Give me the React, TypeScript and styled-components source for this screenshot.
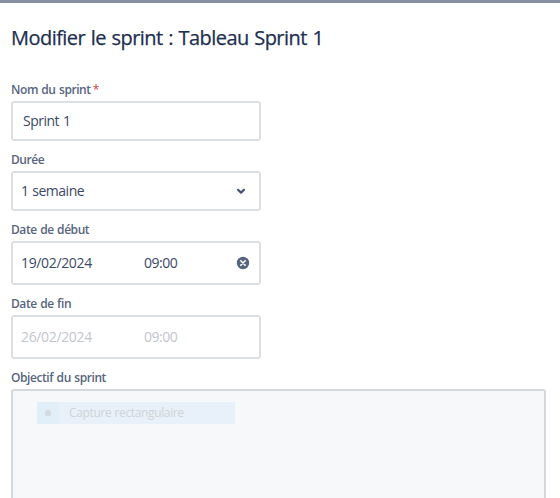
import React from 'react';
import styled, { createGlobalStyle } from 'styled-components';

const GlobalStyle = createGlobalStyle`
  * { box-sizing: border-box; }
  html, body { margin: 0; background: #fff; overflow: hidden; }
  body { font-family: "Open Sans", "Noto Sans", sans-serif; color: #253858; }
`;

const Dialog = styled.main`
  height: 498px;
  overflow: hidden;
  border-top: 3px solid #8590a2;
  padding: 21px 14px 0 11px;
`;

const Title = styled.h1`
  margin: 0 0 30px;
  font-size: 20px;
  line-height: 28px;
  font-weight: 400;
  letter-spacing: -0.54px;
  word-spacing: 0.9px;
  -webkit-text-stroke: 0.25px currentColor;
  white-space: nowrap;
  color: #1d2f50;
`;

const Field = styled.div`
  margin-bottom: 11px;
`;

const Label = styled.label`
  display: block;
  height: 16px;
  margin-bottom: 3px;
  font-size: 12px;
  line-height: 16px;
  font-weight: 600;
  letter-spacing: -0.42px;
  word-spacing: 0.7px;
  color: #58657e;
`;

const Required = styled.span`
  margin-left: 2px;
  color: #d0443e;
  font-size: 12px;
  font-weight: 400;
`;

const Control = styled.div<{ $height?: number; $indent?: number; $disabled?: boolean }>`
  display: flex;
  align-items: center;
  width: 250px;
  height: ${({ $height = 40 }) => $height}px;
  padding: 0 10px 0 ${({ $indent = 8 }) => $indent}px;
  border: 2px solid #dcdfe4;
  border-radius: 3px;
  background: #fff;
  font-size: 14px;
  line-height: 20px;
  color: ${({ $disabled }) => ($disabled ? '#c2c6cc' : '#3a4967')};
`;

const Value = styled.span`
  flex: 1;
  letter-spacing: -0.5px;
  word-spacing: 0.7px;
`;

const DateValue = styled.span`
  width: 123px;
  letter-spacing: -0.35px;
`;

const TimeValue = styled.span`
  flex: 1;
  letter-spacing: -0.5px;
`;

const ChevronIcon = styled.svg`
  width: 10px;
  height: 8px;
  margin-right: 3px;
`;

const ClearIcon = styled.svg`
  width: 14px;
  height: 14px;
  margin-right: -1px;
`;

const GoalArea = styled.div`
  height: 140px;
  padding: 11px 24px;
  border: 2px solid #d5d8dd;
  border-radius: 3px;
  background: #f7f8fa;
`;

const CaptureItem = styled.div`
  display: flex;
  width: 198px;
  height: 22px;
  background: #e8f1f9;
`;

const CaptureMark = styled.span`
  display: flex;
  align-items: center;
  justify-content: center;
  width: 22px;
  background: #e1eff9;
`;

const Dot = styled.svg`
  width: 8px;
  height: 8px;
  fill: #d4dae0;
`;

const CaptureLabel = styled.span`
  padding-left: 10px;
  font-size: 12px;
  line-height: 22px;
  letter-spacing: -0.36px;
  word-spacing: 0.4px;
  color: #d0d3d7;
`;

export default function App() {
  return (
    <>
      <GlobalStyle />
      <Dialog>
        <Title>Modifier le sprint : Tableau Sprint 1</Title>
        <Field>
          <Label>Nom du sprint<Required>*</Required></Label>
          <Control $indent={10}><Value>Sprint 1</Value></Control>
        </Field>
        <Field>
          <Label>Durée</Label>
          <Control>
            <Value>1 semaine</Value>
            <ChevronIcon viewBox="0 0 10 8" fill="none" stroke="#46536f" strokeWidth="2.2" strokeLinecap="round" strokeLinejoin="round">
              <path d="M2 2.8 5 5.6 8 2.8" />
            </ChevronIcon>
          </Control>
        </Field>
        <Field>
          <Label>Date de début</Label>
          <Control $height={44}>
            <DateValue>19/02/2024</DateValue>
            <TimeValue>09:00</TimeValue>
            <ClearIcon viewBox="0 0 14 14">
              <circle cx="7" cy="7" r="6.2" fill="#57647e" />
              <path d="m4.8 4.8 4.4 4.4M9.2 4.8 4.8 9.2" stroke="#fff" strokeWidth="1.6" strokeLinecap="round" />
            </ClearIcon>
          </Control>
        </Field>
        <Field>
          <Label>Date de fin</Label>
          <Control $height={44} $disabled>
            <DateValue>26/02/2024</DateValue>
            <TimeValue>09:00</TimeValue>
          </Control>
        </Field>
        <Field>
          <Label>Objectif du sprint</Label>
          <GoalArea>
            <CaptureItem>
              <CaptureMark><Dot viewBox="0 0 8 8"><circle cx="4" cy="4" r="3.2" /></Dot></CaptureMark>
              <CaptureLabel>Capture rectangulaire</CaptureLabel>
            </CaptureItem>
          </GoalArea>
        </Field>
      </Dialog>
    </>
  );
}
